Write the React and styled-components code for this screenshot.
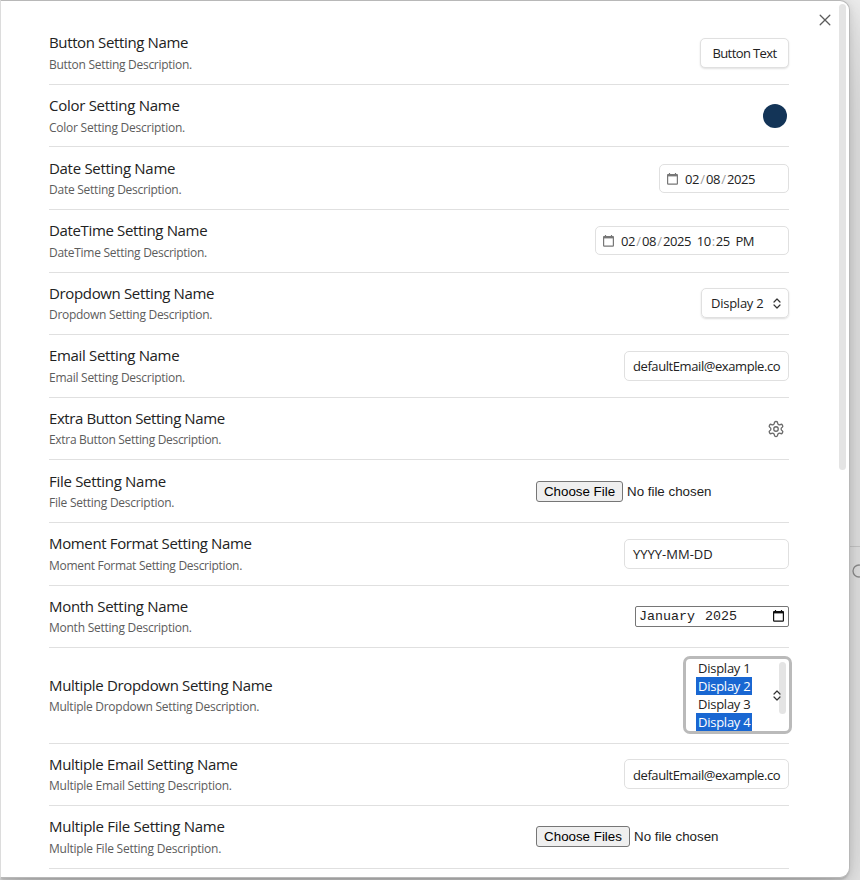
import React from "react";
import styled, { createGlobalStyle } from "styled-components";

const GlobalStyle = createGlobalStyle`
  * { box-sizing: border-box; }
  html, body { margin: 0; height: 880px; overflow: hidden; }
  body { font-family: "Open Sans", "Noto Sans", sans-serif; color: #222; }
`;

const Backdrop = styled.div`
  position: relative;
  width: 860px;
  height: 880px;
  overflow: hidden;
  background: #f0f0f0;
`;

const BehindPane = styled.div`
  position: absolute;
  left: 849px;
  top: 546px;
  width: 11px;
  height: 50px;
  overflow: hidden;
  border-top: 1px solid #d4d4d4;
`;

const BehindIcon = styled.svg`
  position: absolute;
  left: 3px;
  top: 17px;
`;

const Modal = styled.main`
  position: relative;
  width: 850px;
  height: 878px;
  padding: 21px 0 0 48px;
  background: #fff;
  border: 1px solid #b8b8b8;
  border-left-color: #dcdcdc;
  border-radius: 0 10px 10px 0;
  box-shadow:
    0 3px 2px -1px rgba(0, 0, 0, 0.12),
    0 1.8px 7.3px rgba(0, 0, 0, 0.071),
    0 6.3px 24.7px rgba(0, 0, 0, 0.112),
    0 30px 90px rgba(0, 0, 0, 0.2);
`;

const CloseButton = styled.button`
  position: absolute;
  left: 815px;
  top: 10px;
  width: 18px;
  height: 18px;
  padding: 0;
  border: 0;
  background: none;
  color: #5c5c5c;
  display: grid;
  place-items: center;
`;

const ScrollThumb = styled.div`
  position: absolute;
  left: 838px;
  top: 3px;
  width: 7px;
  height: 466px;
  border-radius: 4px;
  background: #e4e4e4;
`;

const List = styled.div`
  width: 740px;
`;

const Row = styled.section`
  display: flex;
  align-items: flex-start;
  justify-content: space-between;
  height: ${(p) => p.$height}px;
  border-bottom: 1px solid #e0e0e0;
`;

const Info = styled.div`
  display: flex;
  flex-direction: column;
  gap: ${(p) => p.$gap}px;
  padding-top: ${(p) => p.$top}px;
  white-space: nowrap;
`;

const Name = styled.div`
  font-size: 15px;
  line-height: 22px;
  letter-spacing: ${(p) => p.$spacing}px;
  color: #222;
`;

const Description = styled.div`
  font-size: 12px;
  line-height: 17px;
  letter-spacing: ${(p) => p.$spacing}px;
  color: #5c5c5c;
`;

const Control = styled.div`
  display: flex;
  padding-top: ${(p) => p.$top}px;
`;

const Button = styled.button`
  width: 89px;
  height: 30px;
  padding: 0;
  border: 1px solid #e0e0e0;
  border-radius: 5px;
  background: #fff;
  box-shadow: 0 1px 2px rgba(0, 0, 0, 0.12);
  font: 13px/28px "Open Sans", sans-serif;
  letter-spacing: -0.6px;
  color: #222;
`;

const Swatch = styled.div`
  width: 24px;
  height: 24px;
  margin-right: 2px;
  border-radius: 50%;
  background: #133457;
`;

const Field = styled.div`
  display: flex;
  align-items: center;
  width: ${(p) => p.$width}px;
  height: 30px;
  padding: ${(p) => p.$shift || 0}px 8px 0;
  border: 1px solid #e0e0e0;
  border-radius: 5px;
  background: #fff;
  font-size: 13px;
  line-height: 18px;
  letter-spacing: ${(p) => p.$spacing || 0}px;
  white-space: nowrap;
`;

const DateField = styled(Field)`
  height: 29px;
  padding: 1px 7px 0;
  letter-spacing: -0.44px;

  svg {
    margin: -1px 7px 0 0;
  }
`;

const Separator = styled.span`
  color: #a0a0a0;
  padding: 0 ${(p) => p.$pad}px;
`;

const TimePart = styled.span`
  margin-left: 5.7px;
`;

const Dropdown = styled.div`
  display: flex;
  align-items: center;
  justify-content: space-between;
  width: 88px;
  height: 30px;
  padding: 0 7px 0 9px;
  border: 1px solid #e0e0e0;
  border-radius: 5px;
  box-shadow: 0 1px 2px rgba(0, 0, 0, 0.14);
  font-size: 13px;
  line-height: 18px;
  letter-spacing: -0.25px;
`;

const GearButton = styled.button`
  width: 18px;
  height: 18px;
  margin-right: 4px;
  padding: 0;
  border: 0;
  background: none;
  color: #6a6a6a;
  display: grid;
  place-items: center;
`;

const FilePicker = styled.div`
  display: flex;
  align-items: center;
  gap: 4px;
  width: 253px;
  font: 13.333px "Liberation Sans", Arial, sans-serif;
`;

const FileButton = styled.button`
  width: ${(p) => p.$width}px;
  height: 21px;
  padding: 0;
  border: 1px solid #767676;
  border-radius: 3px;
  background: #efefef;
  font: inherit;
  color: #000;
`;

const MonthInput = styled.div`
  display: flex;
  align-items: center;
  justify-content: space-between;
  width: 154px;
  height: 21px;
  padding: 0 4px 0 3px;
  border: 1px solid #767676;
  border-radius: 2px;
  font: 13.333px/17px "Liberation Mono", "Courier New", monospace;
  color: #222;

  svg {
    margin-top: -1px;
  }
`;

const MonthValue = styled.div`
  display: flex;
  gap: 10px;
`;

const MultiSelect = styled.div`
  position: relative;
  width: 109px;
  height: 78px;
  margin-right: -3px;
  padding: 0 10px;
  border: 3px solid #bababa;
  border-radius: 7px;
  overflow: hidden;
  font-size: 13px;
`;

const Option = styled.div`
  width: 56px;
  height: 18px;
  padding-left: 2px;
  line-height: 18px;
  letter-spacing: -0.25px;
  white-space: nowrap;
  background: ${(p) => (p.$selected ? "#1967d2" : "transparent")};
  color: ${(p) => (p.$selected ? "#fff" : "#222")};
`;

const SelectThumb = styled.div`
  position: absolute;
  left: 93px;
  top: 3px;
  width: 7px;
  height: 52px;
  border-radius: 4px;
  background: #e4e4e4;
`;

const SelectArrows = styled.div`
  position: absolute;
  left: 87px;
  top: 31px;
  display: flex;
`;

const Calendar = ({ color = "#777" }) => (
  <svg width="11" height="12" viewBox="0 0 11 12">
    <path d="M2.5 0v2M8.5 0v2" stroke={color} strokeWidth="1.2" />
    <path d="M.6 1.2h9.8v2.2H.6z" fill={color} />
    <rect x="0.6" y="1.6" width="9.8" height="9.6" rx="0.6" fill="none" stroke={color} strokeWidth="1.2" />
  </svg>
);

const Arrows = () => (
  <svg width="8" height="11" viewBox="0 0 8 11" fill="none" stroke="#333" strokeWidth="1.2" strokeLinecap="round" strokeLinejoin="round">
    <path d="M1 4 4 1l3 3M1 7l3 3 3-3" />
  </svg>
);

const Gear = () => (
  <svg width="18" height="18" viewBox="0 0 24 24" fill="none" stroke="currentColor" strokeWidth="1.75" strokeLinecap="round" strokeLinejoin="round">
    <path d="M12.22 2h-.44a2 2 0 0 0-2 2v.18a2 2 0 0 1-1 1.73l-.43.25a2 2 0 0 1-2 0l-.15-.08a2 2 0 0 0-2.73.73l-.22.38a2 2 0 0 0 .73 2.73l.15.1a2 2 0 0 1 1 1.72v.51a2 2 0 0 1-1 1.74l-.15.09a2 2 0 0 0-.73 2.73l.22.38a2 2 0 0 0 2.73.73l.15-.08a2 2 0 0 1 2 0l.43.25a2 2 0 0 1 1 1.73V20a2 2 0 0 0 2 2h.44a2 2 0 0 0 2-2v-.18a2 2 0 0 1 1-1.73l.43-.25a2 2 0 0 1 2 0l.15.08a2 2 0 0 0 2.73-.73l.22-.39a2 2 0 0 0-.73-2.73l-.15-.08a2 2 0 0 1-1-1.74v-.5a2 2 0 0 1 1-1.74l.15-.09a2 2 0 0 0 .73-2.73l-.22-.38a2 2 0 0 0-2.73-.73l-.15.08a2 2 0 0 1-2 0l-.43-.25a2 2 0 0 1-1-1.73V4a2 2 0 0 0-2-2z" />
    <circle cx="12" cy="12" r="3" />
  </svg>
);

const DateValue = () => (
  <span>
    02<Separator $pad={1.35}>/</Separator>08<Separator $pad={1.35}>/</Separator>2025
  </span>
);

/* height: row height; top/gap: label offset and line gap; at: control offset; ls: label tracking */
const rows = [
  { name: "Button", height: 63, top: 9, gap: 3, at: 16, ls: [-0.37, -0.28], control: <Button>Button Text</Button> },
  { name: "Color", height: 62, top: 9, gap: 3, at: 19, ls: [-0.28, -0.24], control: <Swatch /> },
  {
    name: "Date", height: 63, top: 10, gap: 2, at: 17, ls: [-0.3, -0.25],
    control: <DateField $width={130}><Calendar /><DateValue /></DateField>,
  },
  {
    name: "DateTime", height: 63, top: 9, gap: 3, at: 16, ls: [-0.35, -0.28],
    control: (
      <DateField $width={194}>
        <Calendar />
        <DateValue />
        <TimePart>10<Separator $pad={1}>:</Separator>25</TimePart>
        <TimePart>PM</TimePart>
      </DateField>
    ),
  },
  { name: "Dropdown", height: 62, top: 9, gap: 2, at: 15, ls: [-0.35, -0.29], control: <Dropdown>Display 2<Arrows /></Dropdown> },
  { name: "Email", height: 63, top: 9, gap: 3, at: 16, ls: [-0.34, -0.26], control: <Field $width={165} $spacing={-0.42}>defaultEmail@example.co</Field> },
  { name: "Extra Button", height: 62, top: 9, gap: 2, at: 22, ls: [-0.41, -0.31], control: <GearButton><Gear /></GearButton> },
  { name: "File", height: 63, top: 10, gap: 2, at: 21, ls: [-0.3, -0.24], control: <FilePicker><FileButton $width={87}>Choose File</FileButton>No file chosen</FilePicker> },
  { name: "Moment Format", height: 63, top: 9, gap: 3, at: 16, ls: [-0.36, -0.3], control: <Field $width={165}>YYYY-MM-DD</Field> },
  {
    name: "Month", height: 62, top: 9, gap: 2, at: 20, ls: [-0.31, -0.25],
    control: (
      <MonthInput>
        <MonthValue><span>January</span><span>2025</span></MonthValue>
        <Calendar color="#111" />
      </MonthInput>
    ),
  },
  {
    name: "Multiple Dropdown", height: 96, top: 26, gap: 2, at: 8, ls: [-0.33, -0.27],
    control: (
      <MultiSelect>
        <Option>Display 1</Option>
        <Option $selected>Display 2</Option>
        <Option>Display 3</Option>
        <Option $selected>Display 4</Option>
        <SelectThumb />
        <SelectArrows><Arrows /></SelectArrows>
      </MultiSelect>
    ),
  },
  { name: "Multiple Email", height: 62, top: 9, gap: 2, at: 15, ls: [-0.32, -0.25], control: <Field $width={165} $spacing={-0.42} $shift={2}>defaultEmail@example.co</Field> },
  { name: "Multiple File", height: 63, top: 9, gap: 3, at: 20, ls: [-0.28, -0.23], control: <FilePicker><FileButton $width={94}>Choose Files</FileButton>No file chosen</FilePicker> },
];

export default function App() {
  return (
    <Backdrop>
      <GlobalStyle />
      <BehindPane>
        <BehindIcon width="14" height="14" viewBox="0 0 14 14" fill="none" stroke="#969696" strokeWidth="1.3">
          <circle cx="7" cy="7" r="6" />
        </BehindIcon>
      </BehindPane>
      <Modal>
        <List>
          {rows.map((row) => (
            <Row key={row.name} $height={row.height}>
              <Info $top={row.top} $gap={row.gap}>
                <Name $spacing={row.ls[0]}>{row.name} Setting Name</Name>
                <Description $spacing={row.ls[1]}>{row.name} Setting Description.</Description>
              </Info>
              <Control $top={row.at}>{row.control}</Control>
            </Row>
          ))}
        </List>
        <ScrollThumb />
        <CloseButton aria-label="Close">
          <svg width="12" height="12" viewBox="0 0 12 12" stroke="currentColor" strokeWidth="1.3" strokeLinecap="round">
            <path d="M1.2 1.2l9.6 9.6M10.8 1.2 1.2 10.8" />
          </svg>
        </CloseButton>
      </Modal>
    </Backdrop>
  );
}
